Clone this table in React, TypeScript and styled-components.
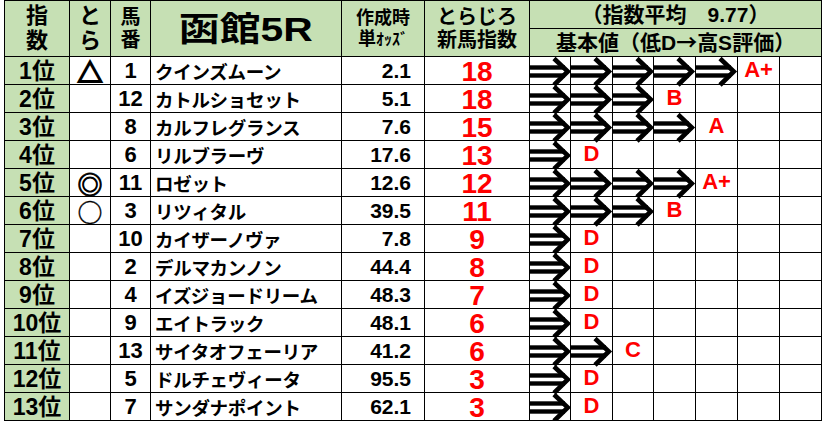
import React from "react";
import styled, { createGlobalStyle } from "styled-components";

const GlobalStyle = createGlobalStyle`
  html, body { margin: 0; padding: 0; background: #ffffff; }
  body {
    font-family: "Liberation Sans", "Noto Sans CJK JP", sans-serif;
    color: #000;
  }
`;

const Sheet = styled.div`
  padding: 0 0 0 4px;
`;

const Table = styled.table`
  border-collapse: collapse;
  table-layout: fixed;
  width: 818px;
  font-weight: 700;
  td, th {
    border: 1px solid #000;
    padding: 0;
    white-space: nowrap;
    box-sizing: border-box;
  }
`;

const Head = styled.th<{ $size?: number }>`
  background: #c6e0b4;
  height: 28px;
  font-size: ${(p) => p.$size ?? 21}px;
  line-height: 1.12;
  font-weight: 700;
  text-align: center;
  vertical-align: middle;
`;

const Title = styled.span`
  display: inline-block;
  font-size: 34px;
  line-height: 1;
  font-weight: 700;
  transform: scaleX(1.2);
`;

const Cjk = styled.span`
  font-family: "Noto Sans CJK JP", sans-serif;
`;

const HalfKana = styled.span`
  font-size: 16px;
`;

const Cell = styled.td`
  height: 28px;
  line-height: 24px;
  background: #fff;
  vertical-align: middle;
`;

const RankCell = styled(Cell)`
  background: #c6e0b4;
  text-align: center;
  font-size: 23px;
`;

const MarkCell = styled(Cell)`
  text-align: center;
  font-size: 25px;
  font-family: "Noto Sans CJK JP", sans-serif;
`;

const Mark = styled.span<{ $stroke: number }>`
  font-weight: 700;
  -webkit-text-stroke: ${(p) => p.$stroke}px #000;
`;

const NumCell = styled(Cell)`
  text-align: center;
  font-size: 22px;
`;

const NameCell = styled(Cell)`
  text-align: left;
  padding-left: 4px !important;
  font-size: 18.5px;
  font-family: "Noto Sans CJK JP", sans-serif;
  letter-spacing: -0.3px;
  overflow: hidden;
`;

const OddsCell = styled(Cell)`
  text-align: right;
  padding-right: 13px !important;
  font-size: 21px;
`;

const IndexCell = styled(Cell)`
  text-align: center;
  font-size: 28px;
  color: #ff0000;
  padding-top: 2px !important;
`;

const ArrowCell = styled(Cell)`
  text-align: center;
`;

const Grade = styled.span`
  color: #ff0000;
  font-size: 22px;
  font-family: "Liberation Sans", sans-serif;
`;

const ArrowSvg = styled.svg`
  display: block;
  margin-left: -1px;
  overflow: visible;
`;

const Arrow = () => (
  <ArrowSvg width="42" height="27" viewBox="0 0 42 27">
    <rect x="0" y="8.3" width="36" height="4.4" fill="#000" />
    <rect x="0" y="16.3" width="36" height="4.4" fill="#000" />
    <polyline
      points="25,1.5 38.8,14.5 25,28"
      fill="none"
      stroke="#000"
      strokeWidth="4.6"
      strokeLinejoin="miter"
    />
  </ArrowSvg>
);

type Row = {
  mark: string;
  num: number;
  name: string;
  odds: string;
  idx: number;
  arrows: number;
  grade: string;
};

const rows: Row[] = [
  { mark: "△", num: 1, name: "クインズムーン", odds: "2.1", idx: 18, arrows: 5, grade: "A+" },
  { mark: "", num: 12, name: "カトルショセット", odds: "5.1", idx: 18, arrows: 3, grade: "B" },
  { mark: "", num: 8, name: "カルフレグランス", odds: "7.6", idx: 15, arrows: 4, grade: "A" },
  { mark: "", num: 6, name: "リルブラーヴ", odds: "17.6", idx: 13, arrows: 1, grade: "D" },
  { mark: "◎", num: 11, name: "ロゼット", odds: "12.6", idx: 12, arrows: 4, grade: "A+" },
  { mark: "○", num: 3, name: "リツィタル", odds: "39.5", idx: 11, arrows: 3, grade: "B" },
  { mark: "", num: 10, name: "カイザーノヴァ", odds: "7.8", idx: 9, arrows: 1, grade: "D" },
  { mark: "", num: 2, name: "デルマカンノン", odds: "44.4", idx: 8, arrows: 1, grade: "D" },
  { mark: "", num: 4, name: "イズジョードリーム", odds: "48.3", idx: 7, arrows: 1, grade: "D" },
  { mark: "", num: 9, name: "エイトラック", odds: "48.1", idx: 6, arrows: 1, grade: "D" },
  { mark: "", num: 13, name: "サイタオフェーリア", odds: "41.2", idx: 6, arrows: 2, grade: "C" },
  { mark: "", num: 5, name: "ドルチェヴィータ", odds: "95.5", idx: 3, arrows: 1, grade: "D" },
  { mark: "", num: 7, name: "サンダナポイント", odds: "62.1", idx: 3, arrows: 1, grade: "D" },
];

const markStroke: Record<string, number> = { "△": 1.8, "◎": 0.9, "○": 0.3 };

const colWidths = [65, 41, 40, 191, 83, 105, 41, 42, 41, 42, 42, 42, 42];

export default function App() {
  return (
    <>
      <GlobalStyle />
      <Sheet>
        <Table>
          <colgroup>
            {colWidths.map((w, i) => (
              <col key={i} style={{ width: w }} />
            ))}
          </colgroup>
          <thead>
            <tr>
              <Head rowSpan={2} $size={22}>
                指<br />数
              </Head>
              <Head rowSpan={2} $size={22}>
                と<br />ら
              </Head>
              <Head rowSpan={2} $size={20}>
                馬<br />番
              </Head>
              <Head rowSpan={2}>
                <Title>函館5R</Title>
              </Head>
              <Head rowSpan={2} $size={18}>
                作成時
                <br />
                単<HalfKana>ｵｯｽﾞ</HalfKana>
              </Head>
              <Head rowSpan={2} $size={20}>
                とらじろ
                <br />
                新馬指数
              </Head>
              <Head colSpan={7} $size={21}>
                （指数平均　9.77）
              </Head>
            </tr>
            <tr>
              <Head colSpan={7} $size={21}>
                基本値（低D<Cjk>→</Cjk>高S評価）
              </Head>
            </tr>
          </thead>
          <tbody>
            {rows.map((r, i) => (
              <tr key={i}>
                <RankCell>{i + 1}位</RankCell>
                <MarkCell>
                  {r.mark && <Mark $stroke={markStroke[r.mark] ?? 0}>{r.mark}</Mark>}
                </MarkCell>
                <NumCell>{r.num}</NumCell>
                <NameCell>{r.name}</NameCell>
                <OddsCell>{r.odds}</OddsCell>
                <IndexCell>{r.idx}</IndexCell>
                {Array.from({ length: 7 }).map((_, c) => (
                  <ArrowCell key={c}>
                    {c < r.arrows ? <Arrow /> : c === r.arrows ? <Grade>{r.grade}</Grade> : null}
                  </ArrowCell>
                ))}
              </tr>
            ))}
          </tbody>
        </Table>
      </Sheet>
    </>
  );
}
